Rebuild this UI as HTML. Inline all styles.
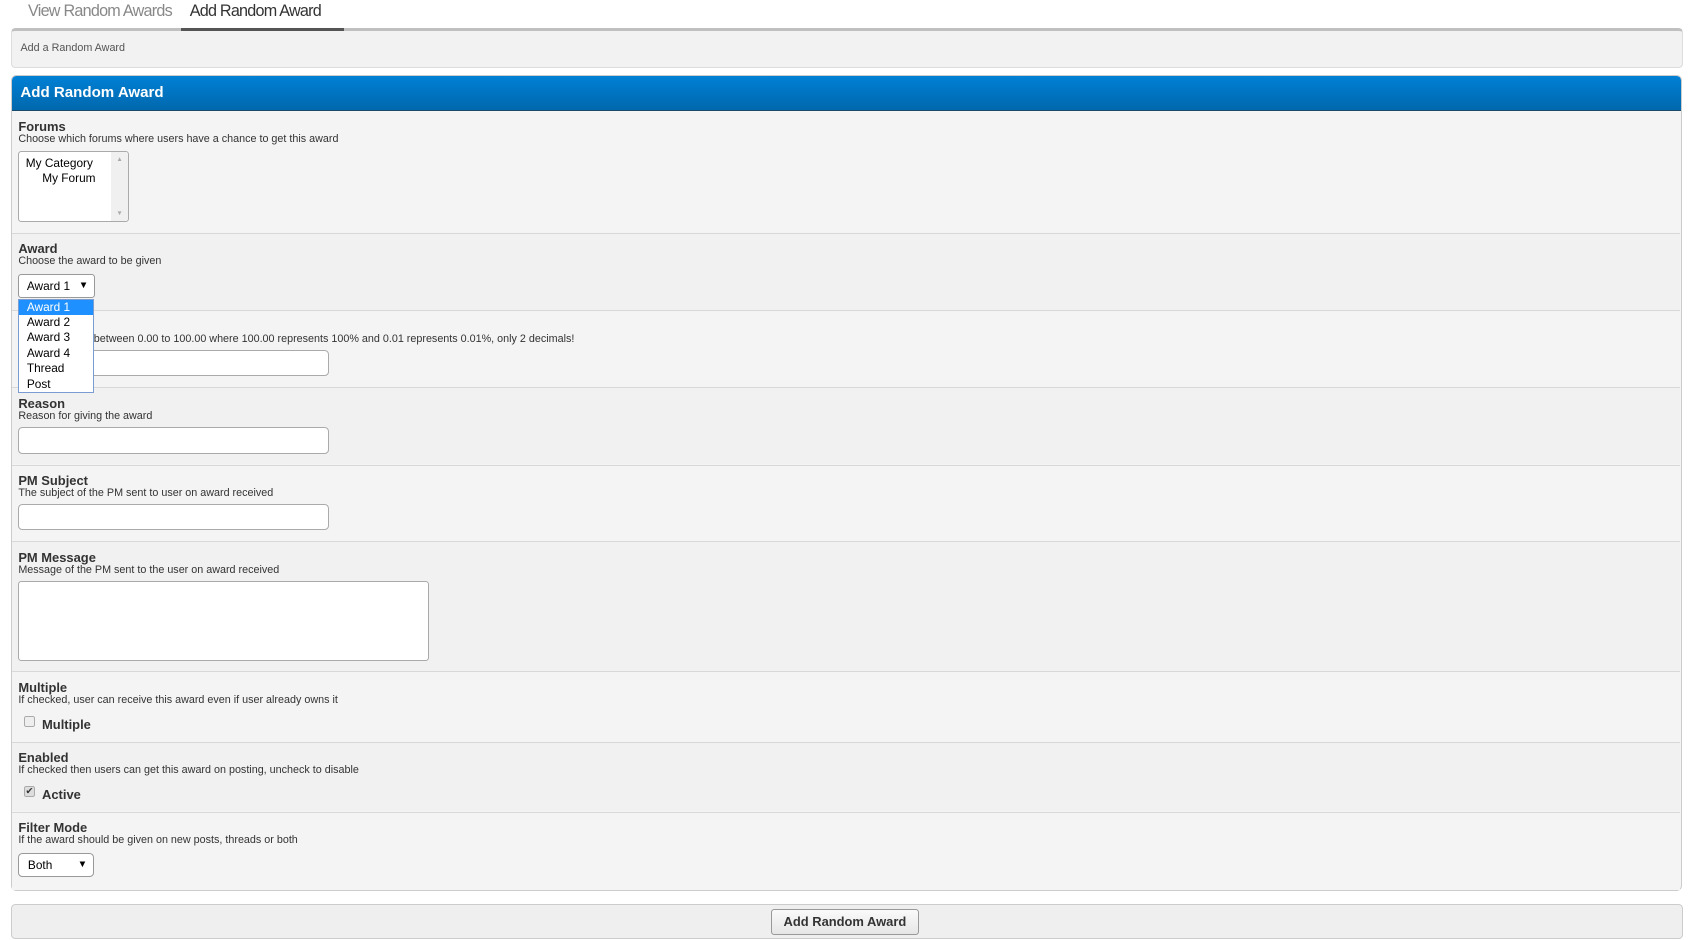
<!DOCTYPE html>
<html><head><style>
body{margin:0;background:#fff;font-family:"Liberation Sans",sans-serif;color:#333;zoom:1.0778;width:1568px;height:872px;position:relative;overflow:hidden}
.a{position:absolute}
.tab{font-size:15px;letter-spacing:-0.7px;top:2px}
.t{font-weight:bold;font-size:12px;color:#333}
.d{font-size:10px;color:#333}
.row{position:absolute;left:11px;width:1548px;border-top:1px solid #d8d8d8}
.inp{position:absolute;background:#fff;border:1px solid #aaa;border-radius:4px}
.sel{position:absolute;background:#fff;border:1px solid #999;border-radius:3px;font-size:11px;color:#000}
</style></head><body>
<div class="a tab" style="left:26px;color:#888">View Random Awards</div>
<div class="a tab" style="left:176px;color:#333">Add Random Award</div>
<div class="a" style="left:10px;top:26px;width:1550px;height:33px;background:#f2f2f2;border:1px solid #ddd;border-top:3px solid #c0c0c0;border-radius:4px"></div>
<div class="a" style="left:168px;top:26px;width:151px;height:3px;background:#555"></div>
<div class="a" style="left:19px;top:39px;font-size:10px;color:#555">Add a Random Award</div>

<div class="a" style="left:10px;top:70px;width:1549px;height:755px;background:#f4f4f4;border:1px solid #ccc;border-radius:5px;overflow:hidden">
<div style="height:31px;background:linear-gradient(#0080d5,#0068ad);border-bottom:1px solid #1a4a6a;color:#fff;font-weight:bold;font-size:14px;line-height:31px;padding-left:8px">Add Random Award</div>
</div>
<div class="row" style="top:216px;height:71px;background:#f1f1f1"></div>
<div class="row" style="top:288px;height:70px;background:#f4f4f4"></div>
<div class="row" style="top:359px;height:71px;background:#f1f1f1"></div>
<div class="row" style="top:431px;height:70px;background:#f4f4f4"></div>
<div class="row" style="top:502px;height:120px;background:#f1f1f1"></div>
<div class="row" style="top:623px;height:64px;background:#f4f4f4"></div>
<div class="row" style="top:688px;height:64px;background:#f1f1f1"></div>
<div class="row" style="top:753px;height:72px;background:#f4f4f4"></div>

<div class="a t" style="left:17px;top:110px">Forums</div>
<div class="a d" style="left:17px;top:123px">Choose which forums where users have a chance to get this award</div>
<div class="inp" style="left:17px;top:140px;width:101px;height:64px;border-radius:3px;overflow:hidden">
<div style="position:absolute;right:0;top:0;width:16px;height:64px;background:#f0f0f0"></div>
<div style="position:absolute;right:5px;top:4px;font-size:6px;color:#aaa">▲</div>
<div style="position:absolute;right:5px;bottom:4px;font-size:6px;color:#aaa">▼</div>
<div style="position:absolute;left:6px;top:4px;font-size:11px;color:#000;line-height:14px">My Category<br>&nbsp;&nbsp;&nbsp;&nbsp;&nbsp;My Forum</div></div>

<div class="a t" style="left:17px;top:224px">Award</div>
<div class="a d" style="left:17px;top:237px">Choose the award to be given</div>
<div class="sel" style="left:17px;top:254px;width:69px;height:21px;line-height:21px"><span style="padding-left:7px">Award 1</span><span style="position:absolute;right:5px;font-size:9px">▼</span></div>

<div class="a d" style="left:87px;top:309px">between 0.00 to 100.00 where 100.00 represents 100% and 0.01 represents 0.01%, only 2 decimals!</div>
<div class="inp" style="left:17px;top:325px;width:286px;height:22px"></div>

<div class="a t" style="left:17px;top:367px">Reason</div>
<div class="a d" style="left:17px;top:380px">Reason for giving the award</div>
<div class="inp" style="left:17px;top:396px;width:286px;height:23px"></div>

<div class="a t" style="left:17px;top:439px">PM Subject</div>
<div class="a d" style="left:17px;top:452px">The subject of the PM sent to user on award received</div>
<div class="inp" style="left:17px;top:468px;width:286px;height:22px"></div>

<div class="a t" style="left:17px;top:510px">PM Message</div>
<div class="a d" style="left:17px;top:523px">Message of the PM sent to the user on award received</div>
<div class="inp" style="left:17px;top:539px;width:379px;height:72px;border-radius:3px"></div>

<div class="a t" style="left:17px;top:631px">Multiple</div>
<div class="a d" style="left:17px;top:644px">If checked, user can receive this award even if user already owns it</div>
<div class="a" style="left:22px;top:664px;width:9px;height:9px;border:1px solid #aaa;border-radius:2px;background:#eee"></div>
<div class="a t" style="left:39px;top:665px">Multiple</div>

<div class="a t" style="left:17px;top:696px">Enabled</div>
<div class="a d" style="left:17px;top:709px">If checked then users can get this award on posting, uncheck to disable</div>
<div class="a" style="left:22px;top:729px;width:9px;height:9px;border:1px solid #aaa;border-radius:2px;background:#ddd;font-size:9px;line-height:9px;text-align:center">✔</div>
<div class="a t" style="left:39px;top:730px">Active</div>

<div class="a t" style="left:17px;top:761px">Filter Mode</div>
<div class="a d" style="left:17px;top:774px">If the award should be given on new posts, threads or both</div>
<div class="sel" style="left:17px;top:791px;width:68px;height:21px;line-height:21px;border-radius:4px"><span style="padding-left:8px">Both</span><span style="position:absolute;right:5px;font-size:9px">▼</span></div>

<div class="a" style="left:17px;top:277px;width:68px;height:86px;background:#fff;border:1px solid #7a9cd3;font-size:11px;color:#000;line-height:14.3px">
<div style="background:#1e90ff;color:#fff;padding-left:7px">Award 1</div>
<div style="padding-left:7px">Award 2</div><div style="padding-left:7px">Award 3</div><div style="padding-left:7px">Award 4</div><div style="padding-left:7px">Thread</div><div style="padding-left:7px">Post</div></div>

<div class="a" style="left:10px;top:839px;width:1550px;height:30px;background:#efefef;border:1px solid #ccc;border-radius:4px"></div>
<div class="a" style="left:715px;top:843px;width:136px;height:23px;background:linear-gradient(#fafafa,#e6e6e6);border:1px solid #999;border-radius:3px;font-weight:bold;font-size:12px;line-height:23px;text-align:center;color:#333">Add Random Award</div>
</body></html>
